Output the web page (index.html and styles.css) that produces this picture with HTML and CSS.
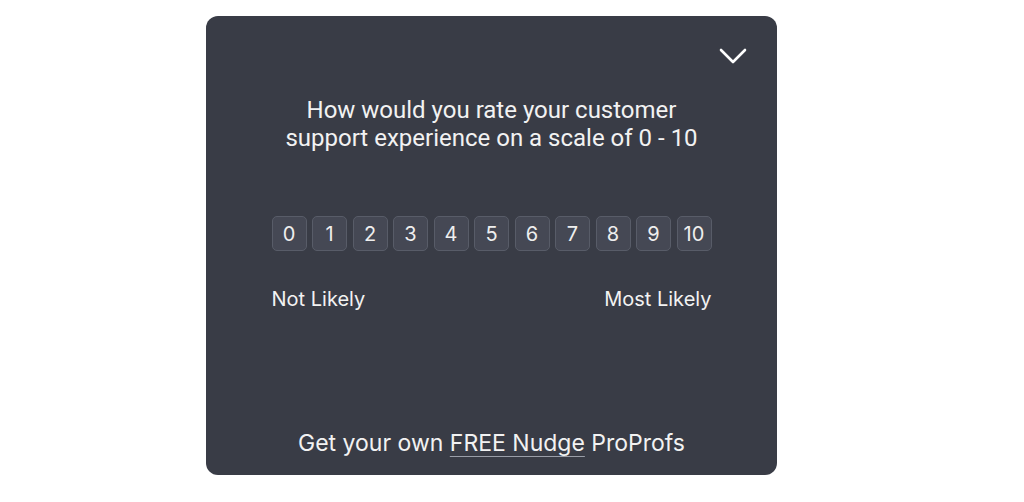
FILE: index.html
```html
<!DOCTYPE html>
<html lang="en">
<head>
<meta charset="UTF-8">
<meta name="viewport" content="width=device-width, initial-scale=1.0">
<title>Nudge Survey</title>
<link rel="stylesheet" href="styles.css">
</head>
<body>

<div class="card">
    <div class="card-top">
        <button class="collapse" aria-label="Collapse">
            <svg width="28" height="16" viewBox="0 0 28 16"><path d="M2 2 L14 14 L26 2" fill="none" stroke="#fff" stroke-width="2.6" stroke-linecap="round" stroke-linejoin="round"/></svg>
        </button>
    </div>

    <p class="question">How would you rate your customer<br>support experience on a scale of 0 - 10</p>

    <div class="scale">
        <div class="scale-row" id="scaleRow"></div>
        <div class="scale-labels">
            <span>Not Likely</span>
            <span>Most Likely</span>
        </div>
    </div>

    <p class="footer">Get your own <a href="#">FREE Nudge</a> ProProfs</p>
</div>

<script>
    const row = document.getElementById('scaleRow');
    for (let i = 0; i <= 10; i++) {
        const btn = document.createElement('button');
        btn.className = 'score';
        btn.textContent = i;
        row.appendChild(btn);
    }
</script>

</body>
</html>
```

FILE: styles.css
```css
body {
    font-family: Inter, "Noto Sans", sans-serif;
    background-color: #fff;
    margin: 0;
    padding: 16px 0 0 206px;
}
.card {
    width: 571px;
    height: 459px;
    box-sizing: border-box;
    background-color: #393c46;
    border-radius: 12px;
    display: flex;
    flex-direction: column;
    align-items: center;
    color: #f2f2f2;
}
.card-top {
    align-self: stretch;
    display: flex;
    justify-content: flex-end;
    padding: 32px 30px 0 0;
}
.collapse {
    background: none;
    border: none;
    padding: 0;
    width: 28px;
    height: 16px;
    cursor: pointer;
}
.collapse svg {
    display: block;
}
.question {
    font-family: Roboto, "Liberation Sans", sans-serif;
    font-size: 24px;
    line-height: 28px;
    text-align: center;
    margin: 32px 0 0;
}
.scale {
    width: 440px;
    margin-top: 64px;
}
.scale-row {
    display: flex;
    justify-content: space-between;
}
.score {
    width: 35px;
    height: 35px;
    padding: 0;
    background-color: #454854;
    border: 1px solid #585c68;
    border-radius: 5px;
    color: #eeeeee;
    font-family: Inter, sans-serif;
    font-size: 20px;
    cursor: pointer;
}
.scale-labels {
    display: flex;
    justify-content: space-between;
    margin-top: 36px;
    font-size: 20px;
    line-height: 24px;
}
.footer {
    margin: auto 0 18px;
    font-size: 23px;
    line-height: 28px;
}
.footer a {
    color: inherit;
    text-decoration: underline;
    text-decoration-color: #9a9ea8;
    text-decoration-thickness: 1px;
    text-underline-offset: 5px;
}
```
